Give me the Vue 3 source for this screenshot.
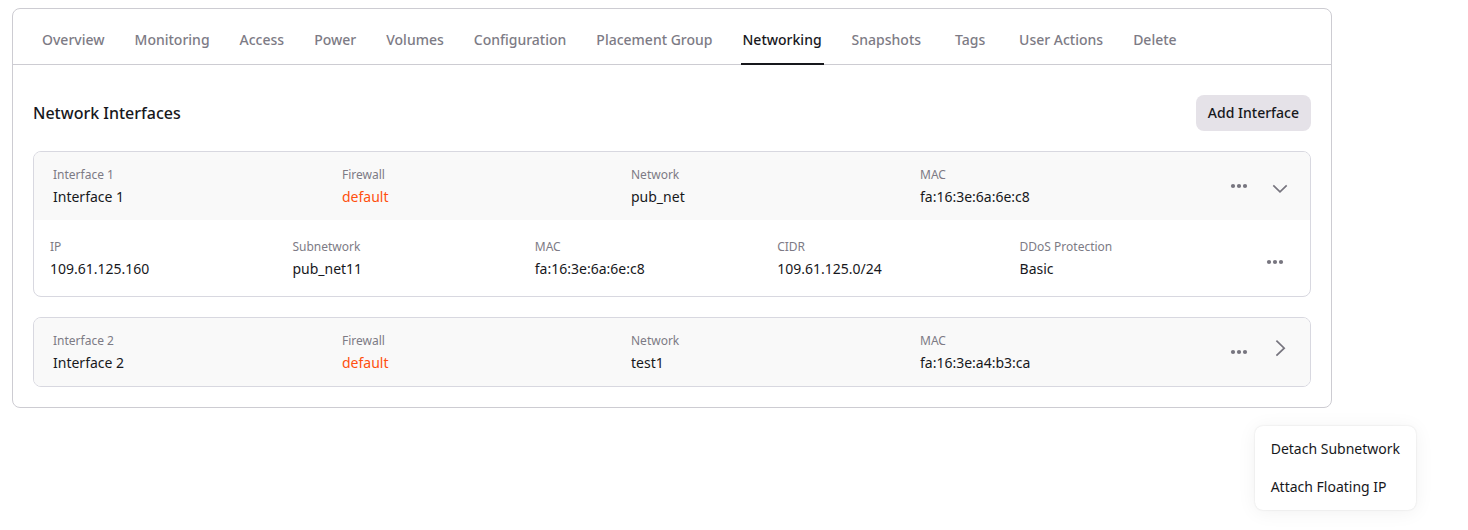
<template>
  <div class="server-page">
    <main class="server-card">
      <nav class="tabs">
        <a
          v-for="tab in tabs"
          :key="tab"
          href="#"
          :class="['tab', { active: tab === activeTab }]"
          @click.prevent="activeTab = tab"
        >{{ tab }}</a>
      </nav>

      <section class="panel">
        <div class="panel-head">
          <h2>Network Interfaces</h2>
          <button type="button" class="add-button">Add Interface</button>
        </div>

        <div v-for="item in interfaces" :key="item.name" class="interface-card">
          <div class="interface-head">
            <div class="field">
              <div class="field-label">{{ item.name }}</div>
              <div class="field-value">{{ item.name }}</div>
            </div>
            <div class="field">
              <div class="field-label">Firewall</div>
              <a href="#" class="field-value firewall-link">{{ item.firewall }}</a>
            </div>
            <div class="field">
              <div class="field-label">Network</div>
              <div class="field-value">{{ item.network }}</div>
            </div>
            <div class="field">
              <div class="field-label">MAC</div>
              <div class="field-value">{{ item.mac }}</div>
            </div>
            <div class="head-actions">
              <button type="button" class="icon-button" aria-label="Interface actions">
                <svg width="18" height="6" viewBox="0 0 18 6" fill="currentColor">
                  <circle cx="3" cy="3" r="2.1" />
                  <circle cx="9" cy="3" r="2.1" />
                  <circle cx="15" cy="3" r="2.1" />
                </svg>
              </button>
              <button
                type="button"
                class="icon-button"
                aria-label="Toggle subnetworks"
                @click="item.open = !item.open"
              >
                <svg v-if="item.open" width="24" height="24" viewBox="0 0 24 24">
                  <path d="M5.3 11.3 L12 17.8 L18.7 11.3" />
                </svg>
                <svg v-else width="24" height="24" viewBox="0 0 24 24">
                  <path d="M8.4 0.7 L16.2 8.2 L8.4 15.7" />
                </svg>
              </button>
            </div>
          </div>

          <template v-if="item.open">
            <div v-for="subnet in item.subnets" :key="subnet.ip" class="subnet-row">
              <div class="field">
                <div class="field-label">IP</div>
                <div class="field-value">{{ subnet.ip }}</div>
              </div>
              <div class="field">
                <div class="field-label">Subnetwork</div>
                <div class="field-value">{{ subnet.name }}</div>
              </div>
              <div class="field">
                <div class="field-label">MAC</div>
                <div class="field-value">{{ subnet.mac }}</div>
              </div>
              <div class="field">
                <div class="field-label">CIDR</div>
                <div class="field-value">{{ subnet.cidr }}</div>
              </div>
              <div class="field">
                <div class="field-label">DDoS Protection</div>
                <div class="field-value">{{ subnet.ddos }}</div>
              </div>
              <div class="row-actions">
                <button type="button" class="icon-button" aria-label="Subnetwork actions">
                  <svg width="18" height="6" viewBox="0 0 18 6" fill="currentColor">
                    <circle cx="3" cy="3" r="2.1" />
                    <circle cx="9" cy="3" r="2.1" />
                    <circle cx="15" cy="3" r="2.1" />
                  </svg>
                </button>
              </div>
            </div>
          </template>
        </div>
      </section>
    </main>

    <div class="subnet-menu">
      <button type="button" class="menu-item">Detach Subnetwork</button>
      <button type="button" class="menu-item">Attach Floating IP</button>
    </div>
  </div>
</template>

<script setup>
import { ref } from 'vue'

const tabs = [
  'Overview',
  'Monitoring',
  'Access',
  'Power',
  'Volumes',
  'Configuration',
  'Placement Group',
  'Networking',
  'Snapshots',
  'Tags',
  'User Actions',
  'Delete'
]

const activeTab = ref('Networking')

const interfaces = ref([
  {
    name: 'Interface 1',
    firewall: 'default',
    network: 'pub_net',
    mac: 'fa:16:3e:6a:6e:c8',
    open: true,
    subnets: [
      {
        ip: '109.61.125.160',
        name: 'pub_net11',
        mac: 'fa:16:3e:6a:6e:c8',
        cidr: '109.61.125.0/24',
        ddos: 'Basic'
      }
    ]
  },
  {
    name: 'Interface 2',
    firewall: 'default',
    network: 'test1',
    mac: 'fa:16:3e:a4:b3:ca',
    open: false,
    subnets: []
  }
])
</script>

<style>
body {
  margin: 0;
  background: #fff;
}
</style>

<style scoped>
.server-page,
.server-page * {
  box-sizing: border-box;
}

.server-page {
  display: flex;
  flex-direction: column;
  gap: 18px;
  min-height: 100vh;
  padding: 8px 52px 16px 12px;
  font-family: 'Noto Sans', sans-serif;
  font-size: 14px;
  line-height: 20px;
  color: #17181c;
}

button {
  margin: 0;
  border: 0;
  font: inherit;
  color: inherit;
  cursor: pointer;
}

a {
  text-decoration: none;
}

.server-card {
  margin-right: 84px;
  border: 1px solid #cdccd2;
  border-radius: 8px;
}

.tabs {
  display: flex;
  gap: 26px;
  padding: 0 27px;
  box-shadow: inset 0 -1px #cdccd2;
}

.tab {
  min-width: 42px;
  padding: 21px 2px 13px;
  border-bottom: 2px solid transparent;
  font-weight: 500;
  text-align: center;
  white-space: nowrap;
  color: #7d7b85;
}

.tab.active {
  border-color: #17181c;
  color: #17181c;
}

.panel {
  display: flex;
  flex-direction: column;
  gap: 20px;
  padding: 30px 20px 20px;
}

.panel-head {
  display: flex;
  align-items: center;
  justify-content: space-between;
}

.panel-head h2 {
  margin: 0;
  font-size: 16px;
  font-weight: 500;
}

.add-button {
  padding: 8px 12px;
  border-radius: 8px;
  background: #e5e2e8;
  font-weight: 500;
}

.interface-card {
  border: 1px solid #d8d8e0;
  border-radius: 8px;
  overflow: hidden;
}

.interface-head {
  display: grid;
  grid-template-columns: repeat(4, 1fr) 87px;
  padding: 13px 14px 13px 19px;
  background: #f9f9f9;
}

.subnet-row {
  display: grid;
  grid-template-columns: repeat(5, 1fr) 32px;
  padding: 17px 16px;
}

.field-label {
  margin-bottom: 2px;
  font-size: 12px;
  color: #7d7b85;
}

.field-value {
  display: block;
}

.firewall-link {
  color: #ff5010;
}

.head-actions {
  display: flex;
  align-items: center;
  justify-content: flex-end;
  gap: 12px;
  height: 42px;
}

.row-actions {
  display: flex;
  align-items: center;
  padding-top: 8px;
}

.icon-button {
  display: flex;
  padding: 4px;
  background: none;
  color: #77757f;
}

.icon-button path {
  fill: none;
  stroke: currentColor;
  stroke-width: 1.7;
}

.subnet-menu {
  display: flex;
  flex-direction: column;
  align-self: flex-end;
  padding: 4px 0;
  border-radius: 8px;
  background: #fff;
  box-shadow: 0 0 2px rgba(0, 0, 0, 0.12), 0 2px 20px rgba(0, 0, 0, 0.06);
}

.menu-item {
  padding: 9px 16px;
  background: none;
  text-align: left;
}
</style>
